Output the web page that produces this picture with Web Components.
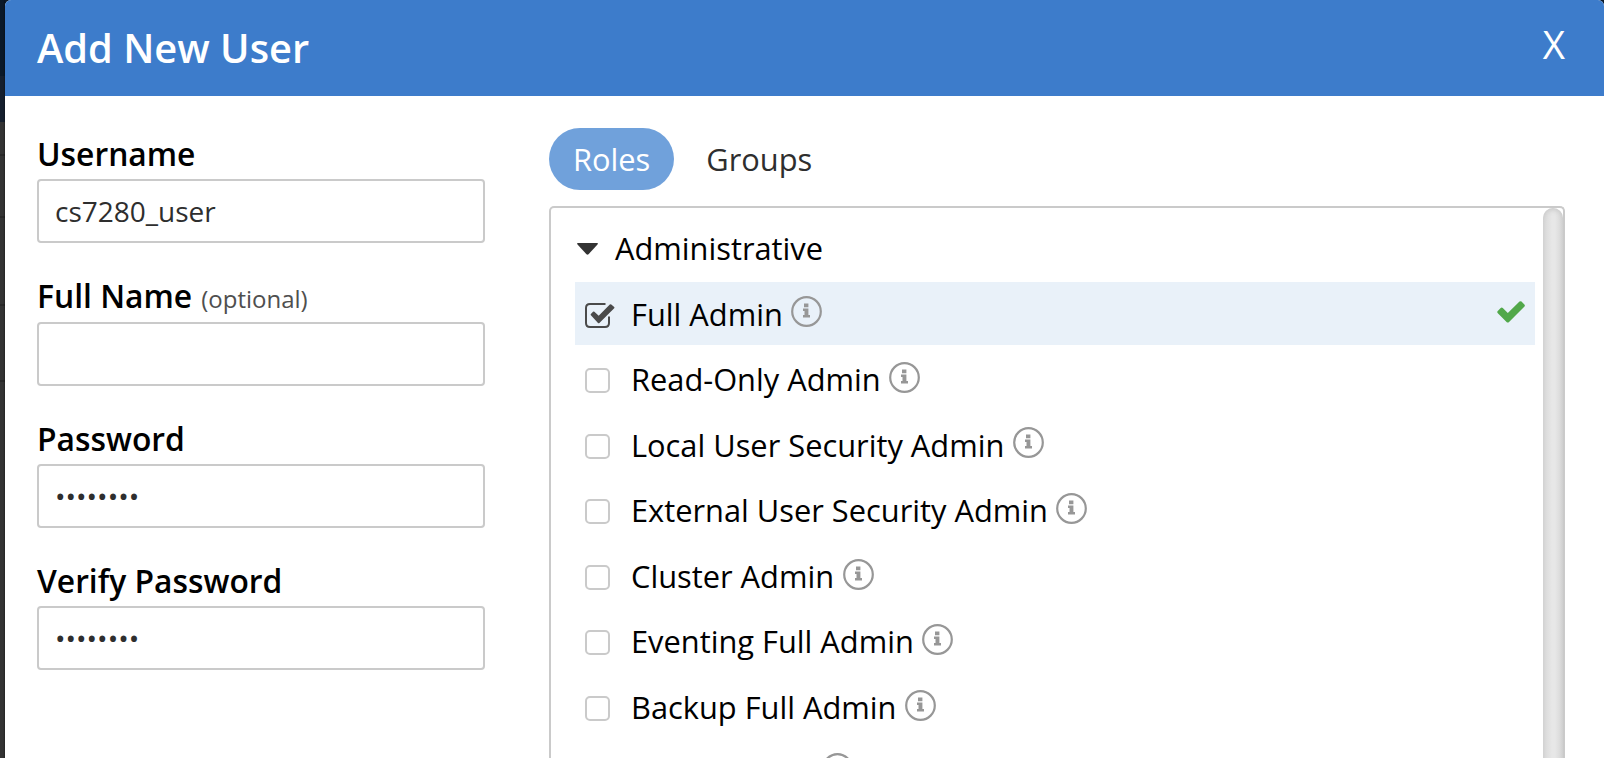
<!DOCTYPE html>
<html lang="en">
<head>
<meta charset="utf-8">
<title>Add New User</title>
<style>
html,body{margin:0;height:100%;overflow:hidden}
body{font-family:"Open Sans","Noto Sans",sans-serif;color:#000}
</style>
</head>
<body>
<user-dialog>
  <form-field slot="fields" label="Username" value="cs7280_user"></form-field>
  <form-field slot="fields" label="Full Name" hint="(optional)"></form-field>
  <form-field slot="fields" label="Password" value="••••••••"></form-field>
  <form-field slot="fields" label="Verify Password" value="••••••••"></form-field>
  <pill-tab slot="tabs" active>Roles</pill-tab>
  <pill-tab slot="tabs">Groups</pill-tab>
  <role-panel slot="panel" heading="Administrative">
    <role-row checked>Full Admin</role-row>
    <role-row>Read-Only Admin</role-row>
    <role-row>Local User Security Admin</role-row>
    <role-row>External User Security Admin</role-row>
    <role-row>Cluster Admin</role-row>
    <role-row>Eventing Full Admin</role-row>
    <role-row>Backup Full Admin</role-row>
    <role-row class="last"><span style="display:inline-block;width:182px"></span></role-row>
  </role-panel>
</user-dialog>
<script>
class Base extends HTMLElement {
  constructor() { super(); this.attachShadow({ mode: "open" }); }
  connectedCallback() { this.shadowRoot.innerHTML = this.render(); }
}

customElements.define("user-dialog", class extends Base {
  render() { return `
<style>
:host{display:block;box-sizing:border-box;height:758px;padding-left:5px;
 background:linear-gradient(90deg,transparent 3px,rgba(0,0,0,.3) 5px) 0 0/5px 100% no-repeat,
 linear-gradient(#0b1929 0 76px,#151f2e 76px 122px,#333 122px 154px,#282828 154px 156px,#333 156px 216px,#282828 216px 218px,#333 218px 304px,#282828 304px 306px,#333 306px 380px,#282828 380px 382px,#333 382px)}
.card{display:flex;flex-direction:column;height:100%;background:#fff;border-radius:6px 6px 0 0;overflow:hidden}
header{flex:none;height:96px;box-sizing:border-box;background:#3d7ccb;color:#fff;display:flex;justify-content:space-between;align-items:flex-start;padding:0 39px 0 32px}
h1{margin:21px 0 0;font-size:39.8px;line-height:54px;font-weight:600}
.x{font-size:38.5px;line-height:54px;font-weight:400;margin-top:17px}
main{flex:1;min-height:0;display:grid;grid-template-columns:448px 1016px;column-gap:64px;padding:0 0 0 32px}
.left{display:flex;flex-direction:column;padding-top:37.4px}
.right{display:flex;flex-direction:column;padding-top:32px;min-height:0}
.tabs{display:flex;gap:8px;height:62px;margin-bottom:16px;flex:none}
::slotted(role-panel){flex:1;min-height:0}
</style>
<div class="card">
<header><h1>Add New User</h1><span class="x">X</span></header>
<main><div class="left"><slot name="fields"></slot></div>
<div class="right"><div class="tabs"><slot name="tabs"></slot></div><slot name="panel"></slot></div></main>
</div>`; }
});

customElements.define("form-field", class extends Base {
  render() {
    const hint = this.getAttribute("hint");
    return `
<style>
:host{display:block;height:142.3px}
.label{height:46px;line-height:41.4px;font-size:31.8px;font-weight:600;white-space:nowrap}
:host([hint]) .label{line-height:40.4px}
small{font-size:24px;font-weight:400;color:#4f4f4f;margin-left:.8px}
.box{box-sizing:border-box;height:64px;border:2px solid #cacaca;border-radius:4px;padding:0 16px;font-size:28px;line-height:61px;color:#2e2e2e}
</style>
<div class="label">${this.getAttribute("label")}${hint ? ` <small>${hint}</small>` : ""}</div>
<div class="box">${this.getAttribute("value") || ""}</div>`; }
});

customElements.define("pill-tab", class extends Base {
  render() { return `
<style>
:host{display:block;height:62px;box-sizing:border-box;padding:0 24px;border-radius:31px;font-size:30.8px;line-height:62px;color:#2e2e2e}
:host([active]){background:#70a1db;color:#fff}
</style><slot></slot>`; }
});

customElements.define("role-panel", class extends Base {
  render() { return `
<style>
:host{display:flex;border:2px solid #cacaca;border-bottom:0;border-radius:5px 5px 0 0;overflow:hidden}
.body{flex:1;padding:10px 8px 0 24px}
.head{display:flex;align-items:center;height:64px;font-size:30.8px;line-height:60px}
.head span{height:64px}
.head svg{margin:-2px 17px 0 2px}
.bar{flex:none;width:20px;border-radius:10px 10px 0 0;background:linear-gradient(90deg,#d3d3d3,#dedede 20%,#e7e7e7 45%,#e7e7e7 60%,#dedede 80%,#d0d0d0);box-shadow:inset 0 4px 5px -2px #cacaca}
</style>
<div class="body"><div class="head"><svg width="21" height="12" viewBox="0 0 21 12"><path d="M.3 0H20.7Q21 .8 20.3 1.7L11.5 11.3Q10.5 12.2 9.5 11.3L.7 1.7Q0 .8.3 0Z" fill="#333"/></svg><span>${this.getAttribute("heading")}</span></div>
<slot></slot></div><div class="bar"></div>`; }
});

customElements.define("role-row", class extends Base {
  render() {
    const on = this.hasAttribute("checked");
    return `
<style>
:host{display:flex;align-items:center;height:63px;margin-bottom:2.6px;font-size:30.8px;line-height:63px;white-space:nowrap}
:host([checked]){background:#e9f1f9}
:host(.last){margin-top:-2px}
slot{display:block;margin-top:1px}
.check{flex:none;margin:5px 16px 0 10px}
.info{flex:none;margin:-3.6px 0 0 8.5px}
.tick{flex:none;margin:-3px 10px 0 auto}
</style>
<svg class="check" width="30" height="27" viewBox="0 0 30 27">${on
  ? `<path transform="translate(0 -1)" d="M20.5 2H5Q1 2 1 6V21Q1 25 5 25H20Q24 25 24 21V14.5" fill="none" stroke="#4a4a4a" stroke-width="2"/><path transform="translate(0 -1)" d="M5.9 11.9L8 9.7Q8.7 9.1 9.4 9.7L13.7 13.7L24.8 2.6Q25.5 1.9 26.3 2.6L29.2 5Q29.8 5.6 29.2 6.3L14.4 21Q13.7 21.6 13 21L5.9 13.3Q5.2 12.6 5.9 11.9Z" fill="#4a4a4a"/>`
  : `<rect x="1" y="1" width="23" height="23" rx="4" fill="#fff" stroke="#cacaca" stroke-width="2"/>`}</svg>
<slot></slot>
<svg class="info" width="31" height="31" viewBox="0 0 31 31"><circle cx="15.5" cy="15.5" r="14.3" fill="none" stroke="#979797" stroke-width="2.2"/><path d="M13 7.4H17.4V11.3H13ZM12 12.6H17.4V19H19V21.6H12V19H13.5V15H12Z" fill="#979797"/></svg>
${on ? `<svg class="tick" width="28" height="22" viewBox="0 0 28 22"><path d="M.5 10.2L3.7 7Q4.8 6.2 5.8 7L10.8 12L22.5.6Q23.5-.2 24.5.6L27.6 3.7Q28.2 4.6 27.5 5.5L11.8 21.2Q10.8 22 9.8 21.2L.6 12.1Q0 11.1.5 10.2Z" fill="#51a84a"/></svg>` : ""}`; }
});
</script>
</body>
</html>
